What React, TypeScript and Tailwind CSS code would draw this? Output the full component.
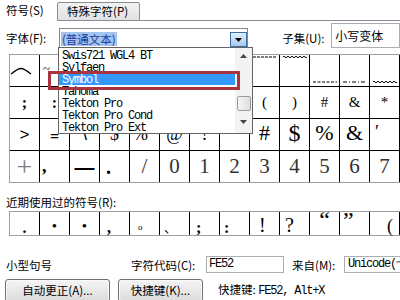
import React from "react";

type Cell = { c?: React.ReactNode; k?: string };

function wave(w: number, y: number) {
  let d = `M0 ${y}`;
  for (let x = 0; x < w; x += 4) d += " q1 -1.6 2 0 q1 1.6 2 0";
  return d;
}

function Rule({ dash, wavy }: { dash?: string; wavy?: boolean }) {
  return (
    <svg width="24" height="4" className="block">
      {wavy ? (
        <path d={wave(24, 2)} fill="none" stroke="#000" strokeWidth="1" />
      ) : (
        <line x1="0" y1="2" x2="24" y2="2" stroke="#000" strokeWidth="1" strokeDasharray={dash} />
      )}
    </svg>
  );
}

function Arch() {
  return (
    <svg width="22" height="8" className="block">
      <path d="M1 7 C6 3 8 1.5 11 1.5 C14 1.5 16 3 21 7" fill="none" stroke="#000" strokeWidth="1.3" />
    </svg>
  );
}

const grid: Cell[][] = [
  [
    { c: <Arch /> },
    { c: "~", k: "justify-start items-start pl-[3px] pt-[6px] text-[13px] leading-[16px]" },
    {}, {}, {}, {}, {}, {},
    { c: <Rule dash="3 1" />, k: "justify-center items-start pt-[0px]" },
    { c: <Rule wavy />, k: "justify-center items-start pt-[0px]" },
    { c: <Rule dash="3 1.5" />, k: "justify-center items-end pb-[2px]" },
    { c: <Rule dash="4 2 1 2" />, k: "justify-center items-end pb-[2px]" },
    { c: <Rule wavy />, k: "justify-center items-end pb-[2px]" },
    {},
  ],
  [
    { c: ";", k: "justify-center text-[16px] font-bold" },
    { c: ":", k: "justify-center text-[16px] font-bold" },
    {}, {}, {}, {}, {}, {},
    { c: "(", k: "justify-center text-[15px]" },
    { c: ")", k: "justify-center text-[15px]" },
    { c: "#", k: "justify-center text-[15px]" },
    { c: "&", k: "justify-center text-[15px]" },
    { c: "*", k: "justify-center text-[15px]" },
    {},
  ],
  [
    { c: ">", k: "justify-center text-[17px] font-['Liberation_Sans',sans-serif]" },
    { c: "=", k: "justify-center text-[16px] font-bold pt-[4px]" },
    { c: "\\", k: "justify-center text-[18px] font-['Liberation_Sans',sans-serif]" },
    { c: "$", k: "justify-center text-[18px]" },
    { c: "%", k: "justify-start pl-[3px] text-[18px]" },
    { c: "@", k: "justify-center text-[18px]" },
    { c: "!", k: "justify-center text-[18px]" },
    {},
    { c: "#", k: "justify-center text-[22px] pb-[4px]" },
    { c: "$", k: "justify-center text-[24px] pb-[4px]" },
    { c: "%", k: "justify-center text-[22px] pb-[4px]" },
    { c: "&", k: "justify-center text-[22px] pb-[4px]" },
    { c: "′", k: "justify-start pl-[5px] text-[18px] pb-[4px]" },
    {},
  ],
  [
    { c: "+", k: "justify-center text-[28px] text-[#808080]" },
    { c: ",", k: "justify-start pl-[2px] text-[18px] font-bold" },
    { c: "—", k: "justify-center text-[20px] font-bold font-['Liberation_Sans',sans-serif]" },
    { c: ".", k: "justify-start pl-[6px] text-[20px] font-bold" },
    { c: "/", k: "justify-center text-[21px] text-[#333]" },
    { c: "0", k: "justify-center text-[21px] text-[#333]" },
    { c: "1", k: "justify-center text-[21px] text-[#333]" },
    { c: "2", k: "justify-center text-[21px] text-[#333]" },
    { c: "3", k: "justify-center text-[21px] text-[#333]" },
    { c: "4", k: "justify-center text-[21px] text-[#333]" },
    { c: "5", k: "justify-center text-[21px] text-[#333]" },
    { c: "6", k: "justify-center text-[21px] text-[#333]" },
    { c: "7", k: "justify-center text-[21px] text-[#333]" },
    {},
  ],
];

const recent: Cell[] = [
  { c: ".", k: "justify-center text-[16px] leading-[14px] font-bold" },
  { c: "•", k: "justify-center text-[15px] leading-[18px]" },
  { c: "•", k: "justify-center text-[15px] leading-[18px]" },
  { c: ",", k: "justify-start pl-[7px] text-[16px] leading-[14px] font-bold" },
  { c: "o", k: "justify-start pl-[8px] text-[9px] leading-[9px] pb-[3px]" },
  { c: "、", k: "justify-start pl-[4px] text-[13px] leading-[16px] font-['Noto_Sans_CJK_SC',sans-serif]" },
  { c: ";", k: "justify-start pl-[6px] text-[16px] leading-[14px] font-bold" },
  { c: ":", k: "justify-start pl-[4px] text-[16px] leading-[14px] font-bold" },
  { c: "!", k: "justify-start pl-[9px] text-[20px] leading-[20px]" },
  { c: "?", k: "justify-start pl-[5px] text-[20px] leading-[20px]" },
  { c: "“", k: "justify-center text-[24px] leading-[30px]" },
  { c: "”", k: "justify-start pl-[3px] text-[24px] leading-[30px]" },
  { c: "(", k: "justify-end pr-[6px] text-[18px] leading-[18px]" },
  {},
];

const fonts = [
  "Swis721 WGL4 BT",
  "Sylfaen",
  "Symbol",
  "Tahoma",
  "Tekton Pro",
  "Tekton Pro Cond",
  "Tekton Pro Ext",
];

const mono = "font-['Liberation_Mono',monospace] text-[12px] tracking-[-1.2px]";

export default function App() {
  return (
    <div className="relative w-[400px] h-[300px] overflow-hidden bg-white text-black text-[11.5px] font-['Noto_Sans_CJK_SC',sans-serif]">
      {/* tabs */}
      <div className="flex items-end h-[21px]">
        <div className="w-[57px] h-[21px] pl-[6px] pt-[2px] leading-[16px]">符号(S)</div>
        <div className="w-[83px] h-[19px] pl-[9px] leading-[17px] border border-[#898c95] rounded-t-[2px] bg-linear-to-b from-[#f3f3f3] to-[#e1e1e1]">
          特殊字符(P)
        </div>
        <div className="flex-1 h-px bg-[#898c95]" />
      </div>

      {/* font + subset row */}
      <div className="flex items-start h-[25px] mt-[2px]">
        <div className="w-[60px] pl-[6px] pt-[7px] leading-[16px]">字体(F):</div>
        <div className="relative w-[193px] h-[20px] mt-[5px] border border-[#828790] bg-white">
          <span className="absolute left-[1px] top-[3px] h-[14px] px-[1px] leading-[14px] bg-[#a3c4ef] text-[#1b3a96]">
            (普通文本)
          </span>
          <div className="absolute right-[0px] top-[3px] w-[17px] h-[15px] border border-[#3c6fa5] bg-linear-to-b from-[#e3eefa] to-[#a8c8ec] flex items-center justify-center">
            <svg width="7" height="4">
              <path d="M0 0 H7 L3.5 4 Z" fill="#000" />
            </svg>
          </div>
        </div>
        <div className="ml-[34px] w-[50px] pt-[7px] leading-[16px]">子集(U):</div>
        <div className="w-[70px] h-[25px] border border-[#abadb3] pl-[3px] pt-[4px] leading-[16px] text-[12px] whitespace-nowrap">
          小写变体
        </div>
      </div>

      {/* symbol grid */}
      <div className="ml-[9px] mt-[6px] w-[420px] border border-[#a0a0a0] font-['Liberation_Serif',serif]">
        <div className="grid grid-cols-[repeat(14,29px)] grid-rows-[repeat(4,31px)] gap-px bg-black">
          {grid.flat().map((cell, i) => (
            <div key={i} className={"flex items-center bg-white " + (cell.k ?? "")}>
              {cell.c}
            </div>
          ))}
        </div>
      </div>

      <div className="pl-[6px] mt-[11px] leading-[16px]">近期使用过的符号(R):</div>

      <div className="ml-[9px] mt-[1px] w-[420px] border border-[#a0a0a0] font-['Liberation_Serif',serif]">
        <div className="grid grid-cols-[repeat(14,29px)] grid-rows-[23px] gap-px bg-black">
          {recent.map((cell, i) => (
            <div key={i} className={"flex items-end bg-white " + (cell.k ?? "")}>
              {cell.c}
            </div>
          ))}
        </div>
      </div>

      {/* char code row */}
      <div className="flex items-center h-[17px] mt-[20px] leading-[16px] whitespace-nowrap">
        <div className="w-[131px] shrink-0 pl-[6px]">小型句号</div>
        <div className="w-[75px] shrink-0">字符代码(C):</div>
        <div className={"w-[78px] shrink-0 h-[17px] border border-[#abadb3] pl-[2px] leading-[15px] " + mono}>FE52</div>
        <div className="ml-[8px] w-[52px] shrink-0">来自(M):</div>
        <div className={"w-[80px] shrink-0 h-[17px] border border-[#abadb3] pl-[3px] leading-[15px] overflow-hidden " + mono}>
          Unicode(十六进制)
        </div>
      </div>

      {/* buttons row */}
      <div className="flex items-start mt-[6px]">
        <div className="ml-[5px] w-[105px] h-[23px] flex items-center justify-center border border-[#707070] rounded-[3px] bg-linear-to-b from-[#f4f4f4] to-[#dcdcdc] shadow-[inset_0_0_0_1px_#fafafa]">
          自动更正(A)...
        </div>
        <div className="ml-[8px] w-[85px] h-[23px] flex items-center justify-center border border-[#707070] rounded-[3px] bg-linear-to-b from-[#f4f4f4] to-[#dcdcdc] shadow-[inset_0_0_0_1px_#fafafa]">
          快捷键(K)...
        </div>
        <div className="ml-[15px] pt-[2px] leading-[16px] whitespace-nowrap">
          快捷键: <span className={mono}>FE52, Alt+X</span>
        </div>
      </div>

      {/* open font dropdown */}
      <div className="absolute left-[58px] top-[47px] w-[195px] h-[87px] border border-[#646464] bg-white flex">
        <div className="flex-1 flex flex-col pt-[1px]">
          {fonts.map((f) => (
            <div
              key={f}
              className={
                "h-[12px] pl-[3px] leading-[15px] whitespace-nowrap " +
                mono +
                (f === "Symbol" ? " bg-[#3399ff] text-white" : "")
              }
            >
              {f}
            </div>
          ))}
        </div>
        <div className="w-[17px] bg-[#f3f3f3] flex flex-col items-center">
          <svg width="7" height="4" className="mt-[6px]">
            <path d="M0 4 H7 L3.5 0 Z" fill="#444" />
          </svg>
          <div className="mt-[38px] w-[14px] h-[15px] border border-[#9a9a9a] rounded-[2px] bg-linear-to-r from-[#f5f5f5] to-[#dedede]" />
          <svg width="7" height="4" className="mt-[9px]">
            <path d="M0 0 H7 L3.5 4 Z" fill="#444" />
          </svg>
        </div>
      </div>

      {/* red highlight box */}
      <div className="absolute left-[48px] top-[71px] w-[192px] h-[19px] border-[3px] border-[#a8343f]" />
    </div>
  );
}
